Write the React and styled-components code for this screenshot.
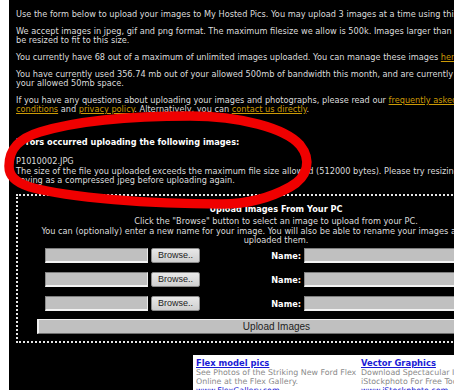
import React from 'react';
import styled, { createGlobalStyle } from 'styled-components';

const Global = createGlobalStyle`
  html, body {
    margin: 0;
    padding: 0;
    background: #fff;
    overflow: hidden;
  }
  body {
    width: 454px;
    height: 390px;
    position: relative;
  }
`;

const Page = styled.div`
  margin-left: 9px;
  width: 600px;
  height: 390px;
  background: #000;
  padding: 10px 0 0 7px;
  box-sizing: border-box;
  font-family: "DejaVu Sans", Verdana, sans-serif;
  font-size: 8.2px;
  color: #dcdcdc;
`;

const Para = styled.p`
  margin: 0 0 8px;
  line-height: 9px;
  white-space: nowrap;
`;

const Link = styled.a`
  color: #cc9a06;
  text-decoration: underline;
`;

const ErrorTitle = styled.div`
  margin-top: 24px;
  font-weight: bold;
  line-height: 9px;
  white-space: nowrap;
  color: #fff;
`;

const ErrorBody = styled.div`
  margin-top: 10px;
  line-height: 9.5px;
  white-space: nowrap;
`;

const UploadBox = styled.div`
  margin-top: 8px;
  width: 516px;
  border: 2px dotted #e6e6e6;
  padding: 9.5px 0 7px;
  text-align: center;
`;

const BoxTitle = styled.div`
  font-weight: bold;
  color: #fff;
  line-height: 9px;
`;

const Help = styled.div`
  margin-top: 3px;
  line-height: 9.5px;
  white-space: nowrap;
`;

const Rows = styled.div`
  margin-top: 2.5px;
  display: flex;
  flex-direction: column;
  gap: 9px;
  padding-left: 27px;
`;

const Row = styled.div`
  display: flex;
  align-items: center;
  height: 15px;
`;

const Field = styled.div`
  width: ${p => p.$w}px;
  height: 15px;
  box-sizing: border-box;
  background: #c0c0c0;
  border-top: 1px solid #7d7d7d;
  border-left: 1px solid #8d8d8d;
  border-bottom: 2px solid #f2f2f2;
  border-right: 1px solid #e8e8e8;
`;

const Browse = styled.div`
  margin-left: 3px;
  width: 49px;
  height: 15px;
  box-sizing: border-box;
  border: 1px solid #8a8a8a;
  border-radius: 2px;
  background: linear-gradient(#e8e8e8, #cfcfcf);
  font-family: "Liberation Sans", Arial, sans-serif;
  font-size: 9px;
  color: #222;
  line-height: 13px;
  text-align: center;
`;

const NameLabel = styled.div`
  width: 104px;
  text-align: right;
  padding-right: 3px;
  box-sizing: border-box;
  font-weight: bold;
  color: #fff;
`;

const UploadButton = styled.div`
  margin: 8px 0 0 19px;
  width: 478px;
  height: 15px;
  box-sizing: border-box;
  background: #c0c0c0;
  border-top: 1px solid #f0f0f0;
  border-left: 2px solid #f0f0f0;
  border-bottom: 1px solid #6e6e6e;
  border-right: 1px solid #6e6e6e;
  font-family: "Liberation Sans", Arial, sans-serif;
  font-size: 10px;
  color: #222;
  line-height: 13px;
  text-align: center;
`;

const Ads = styled.div`
  margin: 12px 0 0 177px;
  background: #fff;
  height: 40px;
  display: flex;
  padding: 3px 0 0 3px;
  box-sizing: border-box;
`;

const Ad = styled.div`
  width: 165px;
  white-space: nowrap;
`;

const AdTitle = styled.a`
  display: block;
  color: #1a1ad6;
  font-weight: bold;
  font-size: 8.4px;
  line-height: 10px;
  text-decoration: underline;
`;

const AdText = styled.div`
  color: #8a8a8a;
  font-size: 7.9px;
  line-height: 9px;
`;

const AdUrl = styled.div`
  color: #1a1ad6;
  font-size: 7.9px;
  line-height: 9px;
`;

const Scribble = styled.svg`
  position: absolute;
  left: 0;
  top: 0;
  pointer-events: none;
`;

const loop =
  'M 9 166 C 9 148, 20 138, 40 132 C 80 120, 140 116, 190 116 ' +
  'C 240 116, 285 128, 300 145 C 312 160, 308 177, 290 187 ' +
  'C 270 198, 248 204, 222 204 C 150 204, 70 198, 30 187 ' +
  'C 15 182, 9 176, 9 166 Z';

export default function App() {
  const rows = [0, 1, 2];
  return (
    <>
      <Global />
      <Page>
        <Para>Use the form below to upload your images to My Hosted Pics. You may upload 3 images at a time using this form.</Para>
        <Para>
          We accept images in jpeg, gif and png format. The maximum filesize we allow is 500k. Images larger than 800x800 will<br />
          be resized to fit to this size.
        </Para>
        <Para>You currently have 68 out of a maximum of unlimited images uploaded. You can manage these images <Link>here</Link>.</Para>
        <Para>
          You have currently used 356.74 mb out of your allowed 500mb of bandwidth this month, and are currently using 12mb of<br />
          your allowed 50mb space.
        </Para>
        <Para>
          If you have any questions about uploading your images and photographs, please read our <Link>frequently asked questions</Link>, <Link>terms and</Link><br />
          <Link>conditions</Link> and <Link>privacy policy</Link>. Alternatively, you can <Link>contact us directly</Link>.
        </Para>

        <ErrorTitle>Errors occurred uploading the following images:</ErrorTitle>
        <ErrorBody>
          P1010002.JPG<br />
          The size of the file you uploaded exceeds the maximum file size allowed (512000 bytes). Please try resizing the image or<br />
          saving as a compressed jpeg before uploading again.
        </ErrorBody>

        <UploadBox>
          <BoxTitle>Upload Images From Your PC</BoxTitle>
          <Help>
            Click the "Browse" button to select an image to upload from your PC.<br />
            You can (optionally) enter a new name for your image. You will also be able to rename your images after you have<br />
            uploaded them.
          </Help>
          <Rows>
            {rows.map(i => (
              <Row key={i}>
                <Field $w={103} />
                <Browse>Browse..</Browse>
                <NameLabel>Name:</NameLabel>
                <Field $w={200} />
              </Row>
            ))}
          </Rows>
          <UploadButton>Upload Images</UploadButton>
        </UploadBox>

        <Ads>
          <Ad>
            <AdTitle>Flex model pics</AdTitle>
            <AdText>See Photos of the Striking New Ford Flex</AdText>
            <AdText>Online at the Flex Gallery.</AdText>
            <AdUrl>www.FlexGallery.com</AdUrl>
          </Ad>
          <Ad>
            <AdTitle>Vector Graphics</AdTitle>
            <AdText>Download Spectacular Illustrations</AdText>
            <AdText>iStockphoto For Free Today!</AdText>
            <AdUrl>www.iStockphoto.com</AdUrl>
          </Ad>
        </Ads>
      </Page>
      <Scribble width="454" height="390" viewBox="0 0 454 390">
        <path d={loop} fill="none" stroke="#f00000" strokeWidth="9.5" strokeLinejoin="round" />
      </Scribble>
    </>
  );
}
